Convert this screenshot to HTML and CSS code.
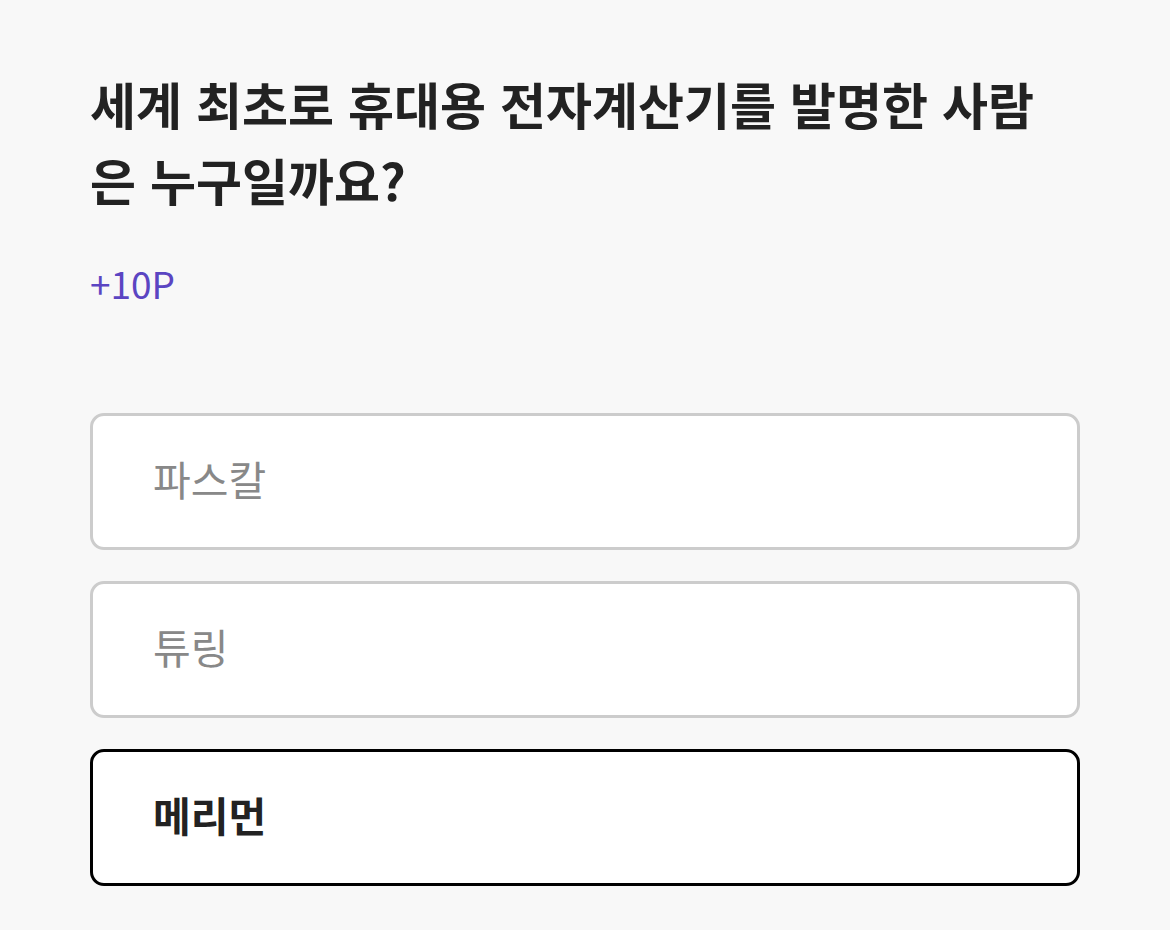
FILE: index.html
```html
<!DOCTYPE html>
<html lang="ko">
<head>
<meta charset="utf-8">
<link rel="stylesheet" href="styles.css">
</head>
<body>
<main class="quiz">
  <h1 class="question">세계 최초로 휴대용 전자계산기를 발명한 사람은 누구일까요?</h1>
  <p class="point">+10P</p>
  <ul class="options">
    <li class="option">파스칼</li>
    <li class="option">튜링</li>
    <li class="option selected">메리먼</li>
  </ul>
</main>
</body>
</html>
```
FILE: styles.css
```css
html, body {
  margin: 0;
  padding: 0;
  background: #f8f8f8;
}
body {
  font-family: "Noto Sans CJK KR", "Noto Sans", sans-serif;
  color: #222;
}
.quiz {
  padding: 65px 90px 0 90px;
}
.question {
  margin: 0;
  font-size: 50px;
  font-weight: 700;
  line-height: 76px;
  width: 960px;
  word-break: break-all;
  color: #222;
}
.point {
  margin: 41px 0 0 0;
  font-size: 37px;
  line-height: 50px;
  font-weight: 400;
  color: #5b45c2;
}
.options {
  list-style: none;
  margin: 105px 0 0 0;
  padding: 0;
  display: flex;
  flex-direction: column;
  gap: 31px;
}
.option {
  box-sizing: border-box;
  height: 137px;
  width: 990px;
  border: 3px solid #cccccc;
  border-radius: 14px;
  background: #fff;
  display: flex;
  align-items: center;
  padding: 0 60px 8px 60px;
  font-size: 41px;
  color: #888;
}
.option.selected {
  border-color: #000;
  color: #222;
  font-weight: 700;
}
```
